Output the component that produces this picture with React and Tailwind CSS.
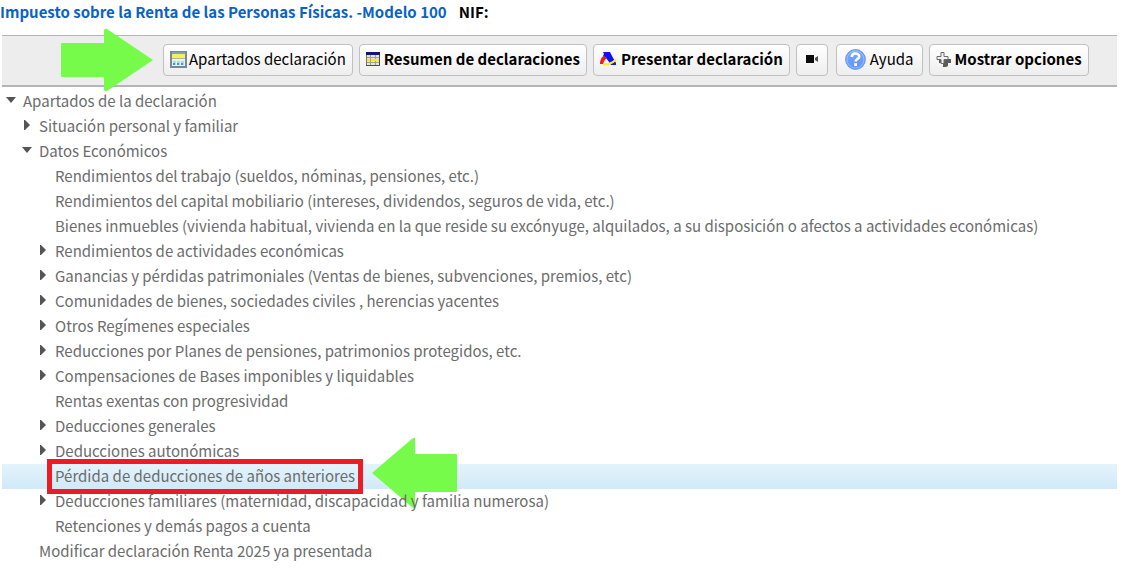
const sections = [
  { label: "Apartados de la declaración", level: 0, state: "open" },
  { label: "Situación personal y familiar", level: 1, state: "closed" },
  { label: "Datos Económicos", level: 1, state: "open" },
  { label: "Rendimientos del trabajo (sueldos, nóminas, pensiones, etc.)", level: 2 },
  { label: "Rendimientos del capital mobiliario (intereses, dividendos, seguros de vida, etc.)", level: 2 },
  {
    label:
      "Bienes inmuebles (vivienda habitual, vivienda en la que reside su excónyuge, alquilados, a su disposición o afectos a actividades económicas)",
    level: 2,
  },
  { label: "Rendimientos de actividades económicas", level: 2, state: "closed" },
  { label: "Ganancias y pérdidas patrimoniales (Ventas de bienes, subvenciones, premios, etc)", level: 2, state: "closed" },
  { label: "Comunidades de bienes, sociedades civiles , herencias yacentes", level: 2, state: "closed" },
  { label: "Otros Regímenes especiales", level: 2, state: "closed" },
  { label: "Reducciones por Planes de pensiones, patrimonios protegidos, etc.", level: 2, state: "closed" },
  { label: "Compensaciones de Bases imponibles y liquidables", level: 2, state: "closed" },
  { label: "Rentas exentas con progresividad", level: 2 },
  { label: "Deducciones generales", level: 2, state: "closed" },
  { label: "Deducciones autonómicas", level: 2, state: "closed" },
  { label: "Pérdida de deducciones de años anteriores", level: 2, selected: true },
  { label: "Deducciones familiares (maternidad, discapacidad y familia numerosa)", level: 2, state: "closed" },
  { label: "Retenciones y demás pagos a cuenta", level: 2 },
  { label: "Modificar declaración Renta 2025 ya presentada", level: 1 },
];

const indents = ["pl-[3px]", "pl-[19px]", "pl-[35px]"];

function SectionsIcon() {
  return (
    <svg width="17" height="17" viewBox="0 0 17 17" aria-hidden="true">
      <rect x="0.5" y="0.5" width="16" height="16" fill="#e3f2fa" stroke="#7b8791" />
      <rect x="1" y="1" width="15" height="2" fill="#7fa3bd" />
      <rect x="2" y="3" width="13" height="4" fill="#f7ee5c" />
      <rect x="2" y="7" width="13" height="1" fill="#b9b78a" />
      <path d="M3 10h3v4H3zM7 10h3v4H7zM11 10h3v4h-3z" fill="#a9daf4" />
      <path d="M3 12h2v2H3zM7 12h2v2H7zM11 12h2v2h-2z" fill="#3d9bd0" />
      <path d="M1.500 1v15M15.500 1v15M1 15.500h15" stroke="#7b8791" />
    </svg>
  );
}

function TableIcon() {
  return (
    <svg width="14" height="14" viewBox="0 0 14 14" aria-hidden="true">
      <rect x="0.5" y="0.5" width="13" height="13" fill="#e6e4da" stroke="#77746a" />
      <path d="M4.500 3v10M9.500 3v10M1 5.500h12M1 10.500h12" stroke="#a09e94" />
      <rect x="1" y="7" width="12" height="2" fill="#f0e822" />
      <path d="M4.500 6v3" stroke="#b5ae3a" />
      <rect width="14" height="3" fill="#14147e" />
      <path d="M13.500 3v10.500H0" stroke="#4a4a46" fill="none" />
    </svg>
  );
}

function AgencyIcon() {
  return (
    <svg width="17" height="14" viewBox="0 0 17 14" aria-hidden="true">
      <path d="M3 0h7l2 4 4 7v2h-5l-2-3-3-4-3-2 1-2z" fill="#1212f0" />
      <path d="M0 12c0-4 2-8 4-8l3 2c-2 1-3 3-4 6z" fill="#ee1c24" />
      <path d="M3 12.500c5 .5 9-1 13-5" stroke="#fff01a" strokeWidth="2" fill="none" />
    </svg>
  );
}

function CameraIcon() {
  return (
    <svg width="12" height="8" viewBox="0 0 12 8" aria-hidden="true">
      <rect x="0" y="0" width="8" height="8" fill="#0c0c0c" />
      <path d="M12 1v6L9 5V3z" fill="#55504a" />
    </svg>
  );
}

function HelpIcon() {
  return (
    <svg width="21" height="21" viewBox="0 0 21 21" aria-hidden="true">
      <defs>
        <linearGradient id="help" x1="0" y1="0" x2="0" y2="1">
          <stop offset="0" stopColor="#7fa8fa" />
          <stop offset="1" stopColor="#5a96ff" />
        </linearGradient>
      </defs>
      <circle cx="10.5" cy="10.5" r="9.800" fill="url(#help)" stroke="#7099e8" strokeWidth="1.200" />
      <circle cx="10.5" cy="10.5" r="8.500" fill="none" stroke="#a9c6fc" strokeWidth="0.800" />
      <path d="M6.800 8c0-4.500 7.400-4.500 7.400-.6 0 2.600-3.600 2.600-3.600 5.200" stroke="#fff" strokeWidth="2.600" fill="none" />
      <rect x="9.200" y="14.200" width="2.800" height="2.800" fill="#fff" />
    </svg>
  );
}

function PlusIcon() {
  return (
    <svg width="15" height="15" viewBox="0 0 15 15" aria-hidden="true">
      <path d="M7 4h3v3h5v4h-3v3l-2 1H7v-4H3V8h4z" fill="#5b5b59" />
      <path d="M5 .5h3v4h4v3H8v4H5v-4H1v-3h4z" fill="#f2f2f2" stroke="#6a6a68" />
    </svg>
  );
}

function ToolButton({ icon, children, className = "", ...props }) {
  return (
    <button
      type="button"
      className={`flex h-8 items-center justify-center rounded border border-[#c0c0c0] bg-linear-to-b from-white to-[#eeeeee] pb-0.5 text-black whitespace-nowrap ${className}`}
      {...props}
    >
      {icon}
      {children}
    </button>
  );
}

function Marker({ state }) {
  return (
    <span className="flex w-4 shrink-0 pb-1">
      {state === "open" && (
        <svg width="12" height="8" viewBox="0 0 12 8" aria-hidden="true">
          <path d="M1 1h10L6 7z" fill="#555" />
        </svg>
      )}
      {state === "closed" && (
        <svg width="10" height="10" viewBox="0 0 10 10" aria-hidden="true">
          <path d="M3 0h1l5 5-5 5H3z" fill="#555" />
        </svg>
      )}
    </span>
  );
}

function TreeRow({ item }) {
  return (
    <li
      className={`flex h-[25px] items-center whitespace-nowrap ${indents[item.level]} ${
        item.selected ? "bg-linear-to-b from-[#e4f3fb] to-[#d0eaf8]" : ""
      }`}
    >
      <Marker state={item.state} />
      <a href="#" className="relative px-0.5">
        {item.label}
        {item.selected && (
          <>
            <span className="absolute -inset-x-1.5 -inset-y-1.5 border-5 border-[#ed1c24]" />
            <svg className="absolute -top-7 left-full ml-3.5" width="87" height="72" viewBox="0 0 87 72" aria-hidden="true">
              <path d="M1 36L42 1q2-1 2 1v15h41q1 0 1 1v36q0 1-1 1H44v15q0 2-2 1z" fill="#77fb4b" />
            </svg>
          </>
        )}
      </a>
    </li>
  );
}

export default function App() {
  return (
    <main className="min-h-screen overflow-hidden bg-white pr-[15px] pl-0.5 font-['Noto_Sans_CJK_SC',sans-serif] text-[15px]">
      <header className="-ml-0.5 flex h-[35px] items-start gap-3 font-bold leading-6">
        <h1 className="text-[#0a62c4]">Impuesto sobre la Renta de las Personas Físicas. -Modelo 100</h1>
        <span className="text-black">NIF:</span>
      </header>

      <nav className="relative flex items-start border-t border-b-2 border-[#b5b5b5] bg-[#ededed] pt-2 pb-[9px] pl-[161px]">
        <svg className="absolute -top-2 left-[59px]" width="92" height="64" viewBox="0 0 92 64" aria-hidden="true">
          <path d="M1 15h42V3q0-3 3-2l46 31-46 31q-3 1-3-2V49H1q-1 0-1-1V16q0-1 1-1z" fill="#77fb4b" />
        </svg>
        <ToolButton icon={<SectionsIcon />} className="gap-0.5 px-1.5">
          Apartados declaración
        </ToolButton>
        <ToolButton icon={<TableIcon />} className="ml-1.5 gap-1 px-1.5 font-bold">
          Resumen de declaraciones
        </ToolButton>
        <ToolButton icon={<AgencyIcon />} className="ml-1.5 gap-1 px-1.5 font-bold">
          Presentar declaración
        </ToolButton>
        <ToolButton icon={<CameraIcon />} className="ml-1.5 w-8" aria-label="Vídeo" />
        <ToolButton icon={<HelpIcon />} className="ml-2 gap-1 px-2">
          Ayuda
        </ToolButton>
        <ToolButton icon={<PlusIcon />} className="ml-1.5 gap-1 px-1.5 font-bold">
          Mostrar opciones
        </ToolButton>
      </nav>

      <ul className="pt-0.5 text-[#6c6c6c]">
        {sections.map((item) => (
          <TreeRow key={item.label} item={item} />
        ))}
      </ul>
    </main>
  );
}
